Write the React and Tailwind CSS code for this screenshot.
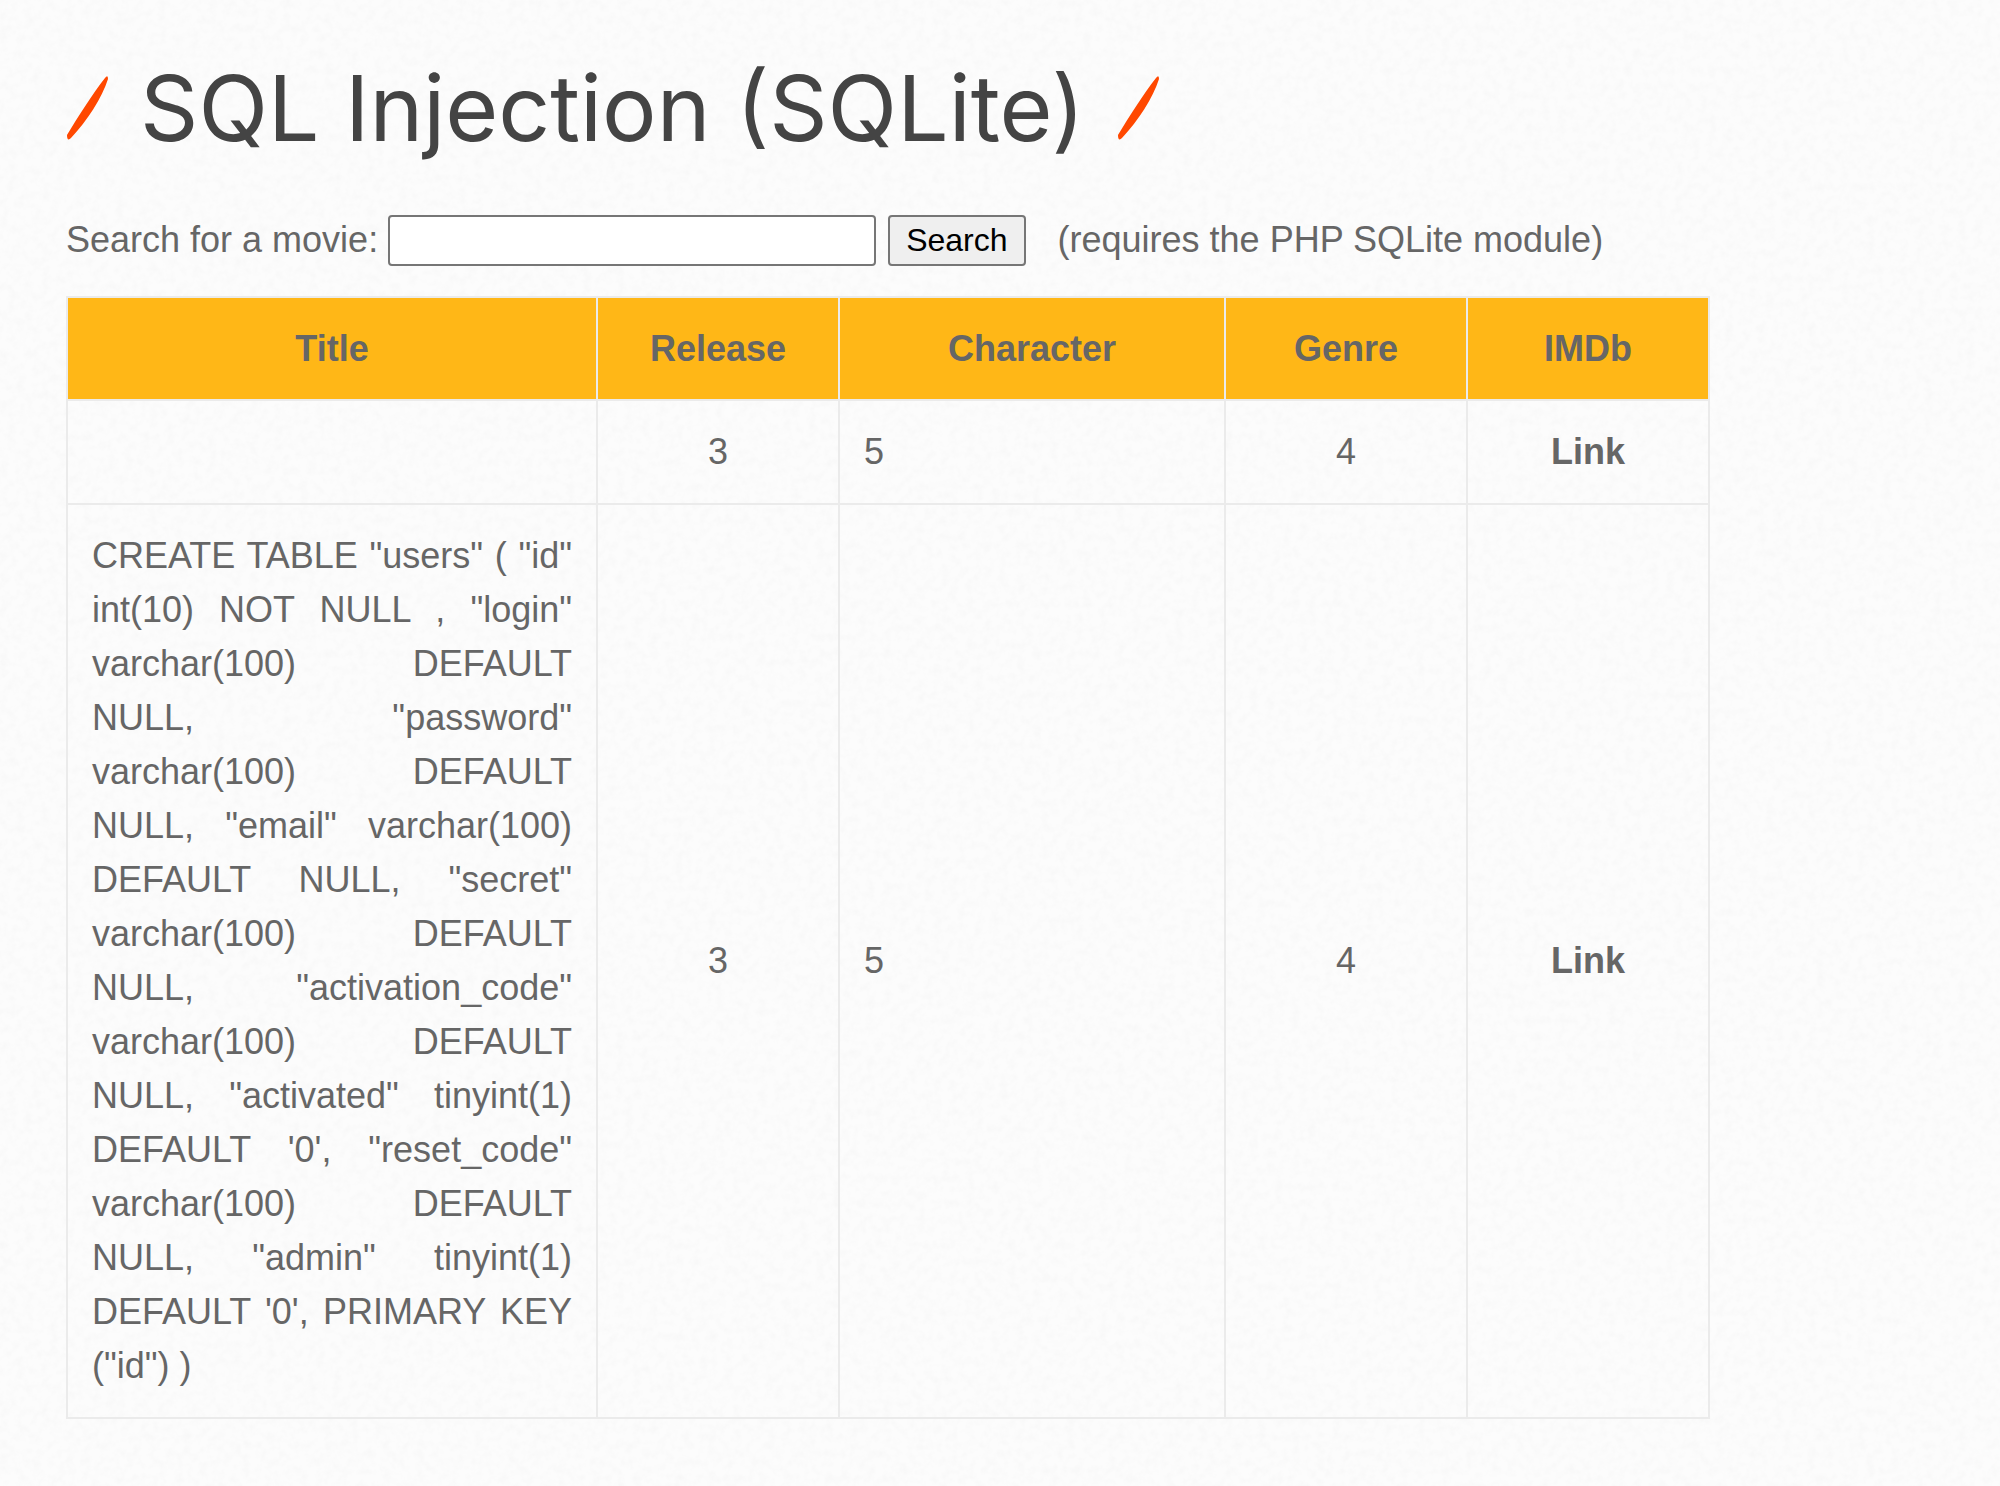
const rows = [
  { title: "", release: "3", character: "5", genre: "4" },
  {
    title:
      'CREATE TABLE "users" ( "id" int(10) NOT NULL , "login" varchar(100) DEFAULT NULL, "password" varchar(100) DEFAULT NULL, "email" varchar(100) DEFAULT NULL, "secret" varchar(100) DEFAULT NULL, "activation_code" varchar(100) DEFAULT NULL, "activated" tinyint(1) DEFAULT \'0\', "reset_code" varchar(100) DEFAULT NULL, "admin" tinyint(1) DEFAULT \'0\', PRIMARY KEY ("id") )',
    release: "3",
    character: "5",
    genre: "4",
  },
];

// Faint paper grain behind the page content.
function PaperTexture() {
  return (
    <svg className="pointer-events-none absolute inset-0 h-full w-full" aria-hidden="true">
      <filter id="paper" x="0" y="0" width="100%" height="100%">
        <feTurbulence type="fractalNoise" baseFrequency="0.12" numOctaves="3" />
        <feColorMatrix values="0 0 0 0 0.4  0 0 0 0 0.4  0 0 0 0 0.4  0.1 0 0 0 -0.04" />
      </filter>
      <rect width="100%" height="100%" filter="url(#paper)" />
    </svg>
  );
}

function Stroke() {
  return (
    <svg className="h-16 w-[42px] shrink-0" viewBox="0 0 42 64" aria-hidden="true">
      <path
        d="M1 59 C12 41 27 17 39 2 Q42 -2 42 3 C36 22 21 45 5 62 Q1 66 1 59 Z"
        fill="#ff4800"
      />
    </svg>
  );
}

function SearchForm() {
  return (
    <form className="flex items-center" onSubmit={(e) => e.preventDefault()}>
      <label htmlFor="title">Search for a movie:</label>
      <input
        id="title"
        type="text"
        className="ml-[10px] h-[51px] w-[488px] rounded-[4px] border-2 border-[#767676] bg-white px-2 text-[32px] text-black"
      />
      <button
        type="submit"
        className="ml-3 h-[51px] rounded-[4px] border-2 border-[#767676] bg-[#efefef] px-4 text-[32px] leading-[47px] text-black"
      >
        Search
      </button>
      <p className="ml-8">(requires the PHP SQLite module)</p>
    </form>
  );
}

function MovieTable() {
  return (
    <table className="w-full max-w-[1642px] table-fixed border-collapse">
      <colgroup>
        <col className="w-[530px]" />
        <col className="w-[242px]" />
        <col className="w-[386px]" />
        <col className="w-[242px]" />
        <col className="w-[242px]" />
      </colgroup>
      <thead>
        <tr className="bg-[#ffb717]">
          {["Title", "Release", "Character", "Genre", "IMDb"].map((name) => (
            <th key={name} scope="col" className="border-2 border-[#ebebeb] pt-6 pb-[23px] font-bold">
              {name}
            </th>
          ))}
        </tr>
      </thead>
      <tbody>
        {rows.map((row, i) => (
          <tr key={i}>
            <td className="border-2 border-[#ebebeb] p-6 text-justify">{row.title}</td>
            <td className="border-2 border-[#ebebeb] p-6 text-center">{row.release}</td>
            <td className="border-2 border-[#ebebeb] p-6">{row.character}</td>
            <td className="border-2 border-[#ebebeb] p-6 text-center">{row.genre}</td>
            <td className="border-2 border-[#ebebeb] p-6 text-center">
              <a href="#imdb" className="font-bold">
                Link
              </a>
            </td>
          </tr>
        ))}
      </tbody>
    </table>
  );
}

export default function App() {
  return (
    <main className="relative min-h-screen bg-[#fcfcfc] font-['Liberation_Sans',Arial,sans-serif] text-[36px] leading-[54px] text-[#666666]">
      <PaperTexture />
      <div className="relative pt-[58px] pr-8 pb-16 pl-[66px]">
        <h1 className="flex h-[100px] items-center gap-8 font-[Inter,sans-serif] text-[91px] leading-[100px] text-[#444444]">
          <Stroke />
          <span>SQL Injection (SQLite)</span>
          <Stroke />
        </h1>
        <div className="mt-[55px]">
          <SearchForm />
        </div>
        <div className="mt-[29px]">
          <MovieTable />
        </div>
      </div>
    </main>
  );
}
